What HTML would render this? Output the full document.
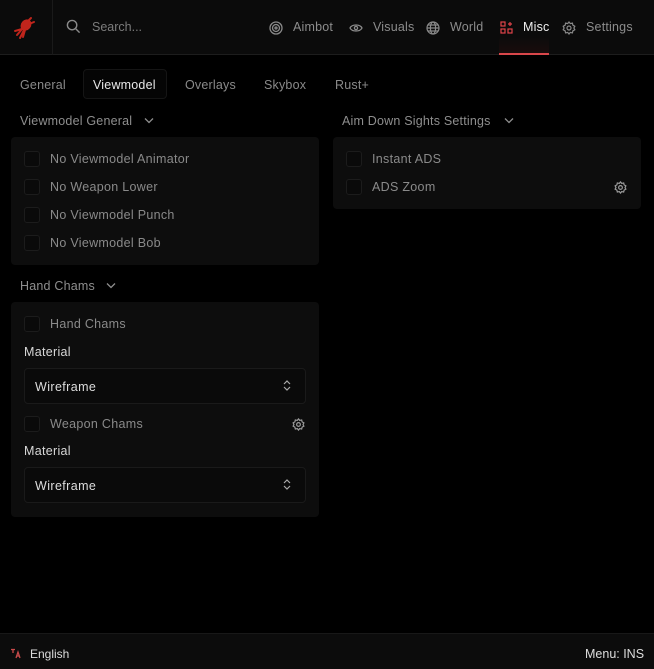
<!DOCTYPE html>
<html><head><style>
*{margin:0;padding:0;box-sizing:border-box}
body{width:654px;height:669px;background:#000;font-family:"Liberation Sans",sans-serif;position:relative;overflow:hidden;color:#8a8a8a;font-size:12.5px}
.a{position:absolute}
.hdr{left:0;top:0;width:654px;height:55px;background:#0b0b0b;border-bottom:1px solid #1d1d1d}
.nav{top:20px;font-size:12.5px;color:#8c8c8c;letter-spacing:.2px}
.tab{top:78px;font-size:12.5px;color:#8a8a8a;letter-spacing:.2px}
.sec{font-size:12.5px;color:#8e8e8e;letter-spacing:.2px}
.panel{background:#0d0d0d;border-radius:4px}
.cb{width:16px;height:16px;border:1px solid #1c1c1c;border-radius:3px;background:#0a0a0a}
.lbl{color:#8a8a8a;font-size:12.5px;letter-spacing:.3px}
.mat{color:#d8d8d8;font-size:12.5px;letter-spacing:.3px}
.dd{background:#0a0a0a;border:1px solid #1a1a1a;border-radius:4px;height:36px;width:282px;left:24px}
.dd span{position:absolute;left:10px;top:11px;color:#ddd;font-size:12.5px;letter-spacing:.4px}
</style></head><body>
<div class="a hdr"></div>
<div class="a" style="left:52px;top:0;width:1px;height:55px;background:#1a1a1a"></div>
<svg class="a" style="left:12px;top:16px" width="24" height="24" viewBox="0 0 24 24"><g stroke="#c0251c" stroke-width="2" fill="#c0251c" stroke-linecap="round"><ellipse cx="14" cy="9" rx="4" ry="5" transform="rotate(40 14 9)"/><path d="M11 12 L5 19 M10 13 L3 15 M12 14 L8 22 M13 14 L11 21 M16 5 L19 2 M17 8 L22 6" fill="none"/></g></svg>
<svg class="a" style="left:66px;top:19px" width="15" height="15" viewBox="0 0 16 16"><circle cx="6.5" cy="6.5" r="5" stroke="#8a8a8a" stroke-width="1.5" fill="none"/><path d="M10.5 10.5L14.5 14.5" stroke="#8a8a8a" stroke-width="1.5"/></svg>
<div class="a" style="left:92px;top:20px;font-size:12.5px;color:#7c7c7c">Search...</div>
<svg class="a" style="left:269px;top:21px" width="14" height="14" viewBox="0 0 14 14" fill="none" stroke="#8a8a8a" stroke-width="1.3"><circle cx="7" cy="7" r="6"/><circle cx="7" cy="7" r="3.5"/><circle cx="7" cy="7" r="1"/></svg>
<div class="a nav" style="left:293px">Aimbot</div>
<svg class="a" style="left:349px;top:22px" width="14" height="12" viewBox="0 0 14 12" fill="none" stroke="#8a8a8a" stroke-width="1.3"><path d="M1 6C3 2 11 2 13 6C11 10 3 10 1 6Z"/><circle cx="7" cy="6" r="1.6"/></svg>
<div class="a nav" style="left:373px">Visuals</div>
<svg class="a" style="left:426px;top:21px" width="14" height="14" viewBox="0 0 14 14" fill="none" stroke="#8a8a8a" stroke-width="1.2"><circle cx="7" cy="7" r="6"/><ellipse cx="7" cy="7" rx="2.6" ry="6"/><path d="M1 7H13M2 4H12M2 10H12"/></svg>
<div class="a nav" style="left:450px">World</div>
<svg class="a" style="left:500px;top:21px" width="13" height="14" viewBox="0 0 13 14" fill="none" stroke="#e0444a" stroke-width="1.2"><rect x="1" y="1" width="4" height="4"/><rect x="1" y="8" width="4" height="4"/><rect x="8" y="8" width="4" height="4"/><path d="M10 1V5M8 3H12"/></svg>
<div class="a nav" style="left:523px;color:#eee">Misc</div>
<div class="a" style="left:499px;top:36px;width:50px;height:18px;background:linear-gradient(#0b0b0b,#1a0d0d)"></div>
<div class="a" style="left:499px;top:53px;width:50px;height:2px;background:#d9474b"></div>
<svg class="a" style="left:562px;top:21px" width="14" height="14" viewBox="0 0 14 14" fill="none" stroke="#8a8a8a" stroke-width="1.2"><circle cx="7" cy="7" r="2"/><path d="M7 1L8.3 2.6L10.4 2.1L10.9 4.2L12.8 5.2L11.9 7L12.8 8.8L10.9 9.8L10.4 11.9L8.3 11.4L7 13L5.7 11.4L3.6 11.9L3.1 9.8L1.2 8.8L2.1 7L1.2 5.2L3.1 4.2L3.6 2.1L5.7 2.6Z"/></svg>
<div class="a nav" style="left:586px">Settings</div>

<div class="a tab" style="left:20px">General</div>
<div class="a" style="left:83px;top:69px;width:84px;height:30px;border:1px solid #151515;border-radius:4px;background:#050505"></div>
<div class="a tab" style="left:93px;color:#e8e8e8">Viewmodel</div>
<div class="a tab" style="left:185px">Overlays</div>
<div class="a tab" style="left:264px">Skybox</div>
<div class="a tab" style="left:335px">Rust+</div>

<div class="a sec" style="left:20px;top:114px">Viewmodel General</div>
<svg class="a" style="left:144px;top:117px" width="10" height="7" viewBox="0 0 10 7" fill="none" stroke="#8e8e8e" stroke-width="1.3"><path d="M1 1.5L5 5.5L9 1.5"/></svg>
<div class="a sec" style="left:342px;top:114px">Aim Down Sights Settings</div>
<svg class="a" style="left:504px;top:117px" width="10" height="7" viewBox="0 0 10 7" fill="none" stroke="#8e8e8e" stroke-width="1.3"><path d="M1 1.5L5 5.5L9 1.5"/></svg>

<div class="a panel" style="left:11px;top:137px;width:308px;height:128px"></div>
<div class="a cb" style="left:24px;top:151px"></div><div class="a lbl" style="left:50px;top:152px">No Viewmodel Animator</div>
<div class="a cb" style="left:24px;top:179px"></div><div class="a lbl" style="left:50px;top:180px">No Weapon Lower</div>
<div class="a cb" style="left:24px;top:207px"></div><div class="a lbl" style="left:50px;top:208px">No Viewmodel Punch</div>
<div class="a cb" style="left:24px;top:235px"></div><div class="a lbl" style="left:50px;top:236px">No Viewmodel Bob</div>

<div class="a panel" style="left:333px;top:137px;width:308px;height:72px"></div>
<div class="a cb" style="left:346px;top:151px"></div><div class="a lbl" style="left:372px;top:152px">Instant ADS</div>
<div class="a cb" style="left:346px;top:179px"></div><div class="a lbl" style="left:372px;top:180px">ADS Zoom</div>
<svg class="a" style="left:614px;top:181px" width="13" height="13" viewBox="0 0 14 14" fill="none" stroke="#9a9a9a" stroke-width="1.3"><circle cx="7" cy="7" r="2"/><path d="M7 1L8.3 2.6L10.4 2.1L10.9 4.2L12.8 5.2L11.9 7L12.8 8.8L10.9 9.8L10.4 11.9L8.3 11.4L7 13L5.7 11.4L3.6 11.9L3.1 9.8L1.2 8.8L2.1 7L1.2 5.2L3.1 4.2L3.6 2.1L5.7 2.6Z"/></svg>

<div class="a sec" style="left:20px;top:279px">Hand Chams</div>
<svg class="a" style="left:106px;top:282px" width="10" height="7" viewBox="0 0 10 7" fill="none" stroke="#8e8e8e" stroke-width="1.3"><path d="M1 1.5L5 5.5L9 1.5"/></svg>
<div class="a panel" style="left:11px;top:302px;width:308px;height:215px"></div>
<div class="a cb" style="left:24px;top:316px"></div><div class="a lbl" style="left:50px;top:317px">Hand Chams</div>
<div class="a mat" style="left:24px;top:345px">Material</div>
<div class="a dd" style="top:368px"><span>Wireframe</span></div>
<svg class="a" style="left:283px;top:379px" width="8" height="13" viewBox="0 0 8 13" fill="none" stroke="#aaa" stroke-width="1.2"><path d="M1 5L4 2L7 5M1 8L4 11L7 8"/></svg>
<div class="a cb" style="left:24px;top:416px"></div><div class="a lbl" style="left:50px;top:417px">Weapon Chams</div>
<svg class="a" style="left:292px;top:418px" width="13" height="13" viewBox="0 0 14 14" fill="none" stroke="#9a9a9a" stroke-width="1.3"><circle cx="7" cy="7" r="2"/><path d="M7 1L8.3 2.6L10.4 2.1L10.9 4.2L12.8 5.2L11.9 7L12.8 8.8L10.9 9.8L10.4 11.9L8.3 11.4L7 13L5.7 11.4L3.6 11.9L3.1 9.8L1.2 8.8L2.1 7L1.2 5.2L3.1 4.2L3.6 2.1L5.7 2.6Z"/></svg>
<div class="a mat" style="left:24px;top:444px">Material</div>
<div class="a dd" style="top:467px"><span>Wireframe</span></div>
<svg class="a" style="left:283px;top:478px" width="8" height="13" viewBox="0 0 8 13" fill="none" stroke="#aaa" stroke-width="1.2"><path d="M1 5L4 2L7 5M1 8L4 11L7 8"/></svg>

<div class="a" style="left:0;top:633px;width:654px;height:36px;background:#0c0c0c;border-top:1px solid #181818"></div>
<svg class="a" style="left:10px;top:648px" width="11" height="11" viewBox="0 0 11 11" fill="none" stroke="#c84a4a" stroke-width="1.3"><path d="M1 1.5H5M3 1.5V5M6 10L8 4L10 10M6.8 8H9.2"/></svg>
<div class="a" style="left:30px;top:647px;font-size:12px;color:#ddd">English</div>
<div class="a" style="left:585px;top:647px;font-size:12.5px;color:#ddd">Menu: INS</div>
</body></html>
